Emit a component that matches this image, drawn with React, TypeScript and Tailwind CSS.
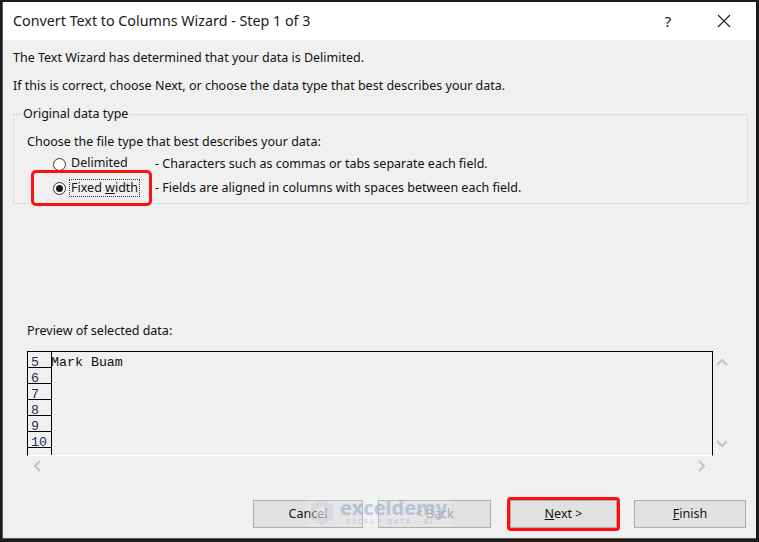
import React from "react";

const ui = { fontFamily: '"Noto Sans", "Open Sans", sans-serif' };
const mono = { fontFamily: '"Liberation Mono", "Courier New", monospace' };

function Radio({ checked }: { checked?: boolean }) {
  return (
    <span className="w-[13px] h-[13px] rounded-full border border-[#333] bg-white flex items-center justify-center shrink-0">
      {checked && <span className="w-[7px] h-[7px] rounded-full bg-[#1a1a1a]" />}
    </span>
  );
}

function Chevron({ dir }: { dir: "up" | "down" | "left" | "right" }) {
  const paths: Record<string, string> = {
    up: "M1 7 L6 2 L11 7",
    down: "M1 2 L6 7 L11 2",
    left: "M7 1 L2 6 L7 11",
    right: "M2 1 L7 6 L2 11",
  };
  const vertical = dir === "up" || dir === "down";
  return (
    <svg width={vertical ? 12 : 9} height={vertical ? 9 : 12} viewBox={vertical ? "0 0 12 9" : "0 0 9 12"}>
      <path d={paths[dir]} fill="none" stroke="#c2c2c2" strokeWidth="2" />
    </svg>
  );
}

function Btn({ children, disabled, w }: { children: React.ReactNode; disabled?: boolean; w: string }) {
  return (
    <div
      className={`${w} h-[28px] bg-[#e1e1e1] border border-[#adadad] flex items-center justify-center text-[12.5px] ${
        disabled ? "text-[#a0a0a0]" : "text-[#111]"
      }`}
    >
      {children}
    </div>
  );
}

export default function App() {
  const rows = ["5", "6", "7", "8", "9", "10", ""];
  return (
    <div className="w-[759px] h-[542px] bg-[#1c1c1c] pt-[2px] pl-[2px] pr-[3px] pb-[3px]" style={ui}>
      <div className="w-full h-full bg-[#f0f0f0] border-l border-b border-[#5a5a5a] flex flex-col relative">
        {/* Title bar */}
        <div className="h-[38px] bg-white flex items-center shrink-0">
          <div className="pl-[10px] text-[14.3px] text-[#1a1a1a] flex-1 leading-none">
            Convert Text to Columns Wizard - Step 1 of 3
          </div>
          <div className="w-[20px] text-[15px] text-[#222] text-center leading-none mr-[39px]">?</div>
          <svg width="14" height="14" viewBox="0 0 14 14" className="mr-[25px]">
            <path d="M1 1 L13 13 M13 1 L1 13" stroke="#222" strokeWidth="1.1" />
          </svg>
        </div>

        {/* Body */}
        <div className="flex-1 flex flex-col text-[12.5px] text-[#111] leading-[16px]">
          <div className="pl-[10px] mt-[10px]">The Text Wizard has determined that your data is Delimited.</div>
          <div className="pl-[10px] mt-[12px]">
            If this is correct, choose Next, or choose the data type that best describes your data.
          </div>

          <fieldset className="ml-[10px] w-[735px] h-[98px] mt-[12px] border border-[#dcdcdc] px-[9px] pb-0 pt-0">
            <legend className="px-[1px] -ml-[1px] leading-[16px]">Original data type</legend>
            <div className="mt-[12px] pl-[4px]">Choose the file type that best describes your data:</div>
            <div className="mt-[6px] flex items-center h-[16px]">
              <div className="w-[30px]" />
              <Radio />
              <span className="ml-[5px] w-[84px] relative -top-[1px]">Delimited</span>
              <span>- Characters such as commas or tabs separate each field.</span>
            </div>
            <div className="mt-[7px] flex items-center h-[18px] relative">
              <div className="w-[30px]" />
              <Radio checked />
              <span className="ml-[3px] px-[1px] border border-dotted border-[#333] leading-[16px]">
                Fixed <u>w</u>idth
              </span>
              <span className="ml-[15px]">- Fields are aligned in columns with spaces between each field.</span>
              <div className="absolute left-[8px] -top-[9px] w-[121px] h-[36px] border-[3px] border-[#ff1010] rounded-[5px]" />
            </div>
          </fieldset>

          <div className="pl-[24px] mt-[119px]">Preview of selected data:</div>

          {/* Preview */}
          <div className="ml-[24px] mt-[12px] w-[704px] flex flex-col">
            <div className="flex">
              <div className="w-[686px] h-[105px] border-t border-l border-r border-black border-b border-b-white overflow-hidden" style={mono}>
                {rows.map((r, i) => (
                  <div key={i} className="flex h-[16px]">
                    <div className="w-[24px] h-[16px] border-r border-b border-black text-[13.3px] leading-[13px] pt-[4px] pl-[3px] text-[#1e2f5a]">
                      {r}
                    </div>
                    <div className="text-[13.3px] leading-[13px] pt-[4px] -ml-[1px] text-[#111]">{i === 0 ? "Mark Buam" : ""}</div>
                  </div>
                ))}
              </div>
              <div className="w-[18px] h-[105px] flex flex-col items-center justify-between pt-[7px] pb-[8px]">
                <Chevron dir="up" />
                <Chevron dir="down" />
              </div>
            </div>
            <div className="w-[686px] h-[19px] flex items-center justify-between pl-[6px] pr-[7px]">
              <Chevron dir="left" />
              <Chevron dir="right" />
            </div>
          </div>

          {/* Buttons */}
          <div className="flex justify-end pr-[10px] mt-[25px]">
            <Btn w="w-[110px]">Cancel</Btn>
            <div className="ml-[15px]">
              <Btn w="w-[113px]" disabled>&lt; Back</Btn>
            </div>
            <div className="relative ml-[19px]">
              <Btn w="w-[107px]">
                <span>
                  <u>N</u>ext &gt;
                </span>
              </Btn>
              <div className="absolute -left-[3px] -top-[3px] w-[113px] h-[34px] border-[3px] border-[#ff1010] rounded-[4px]" />
            </div>
            <div className="ml-[17px]">
              <Btn w="w-[112px]">
                <span>
                  <u>F</u>inish
                </span>
              </Btn>
            </div>
          </div>

          {/* Watermark */}
          <div className="absolute left-[304px] top-[494px] w-[144px] h-[31px] bg-white/20 flex items-center pointer-events-none opacity-70">
            <svg width="24" height="28" viewBox="0 0 24 28" className="ml-[3px]">
              <path d="M12 1 L23 7 L23 21 L12 27 L1 21 L1 7 Z" fill="#c4ccd8" opacity="0.6" />
              <path d="M12 8 L17 11 L17 17 L12 20 L7 17 L7 11 Z" fill="#e8ecf2" opacity="0.8" />
            </svg>
            <div className="ml-[6px] flex flex-col leading-none">
              <span className="text-[20px] font-bold text-[#a8b6d3] leading-[20px]" style={{ fontFamily: '"Open Sans", sans-serif' }}>
                exceldemy
              </span>
              <span className="text-[7px] tracking-[2px] text-[#b5bcc8] ml-[6px]">EXCEL · DATA · BI</span>
            </div>
          </div>
        </div>
      </div>
    </div>
  );
}
